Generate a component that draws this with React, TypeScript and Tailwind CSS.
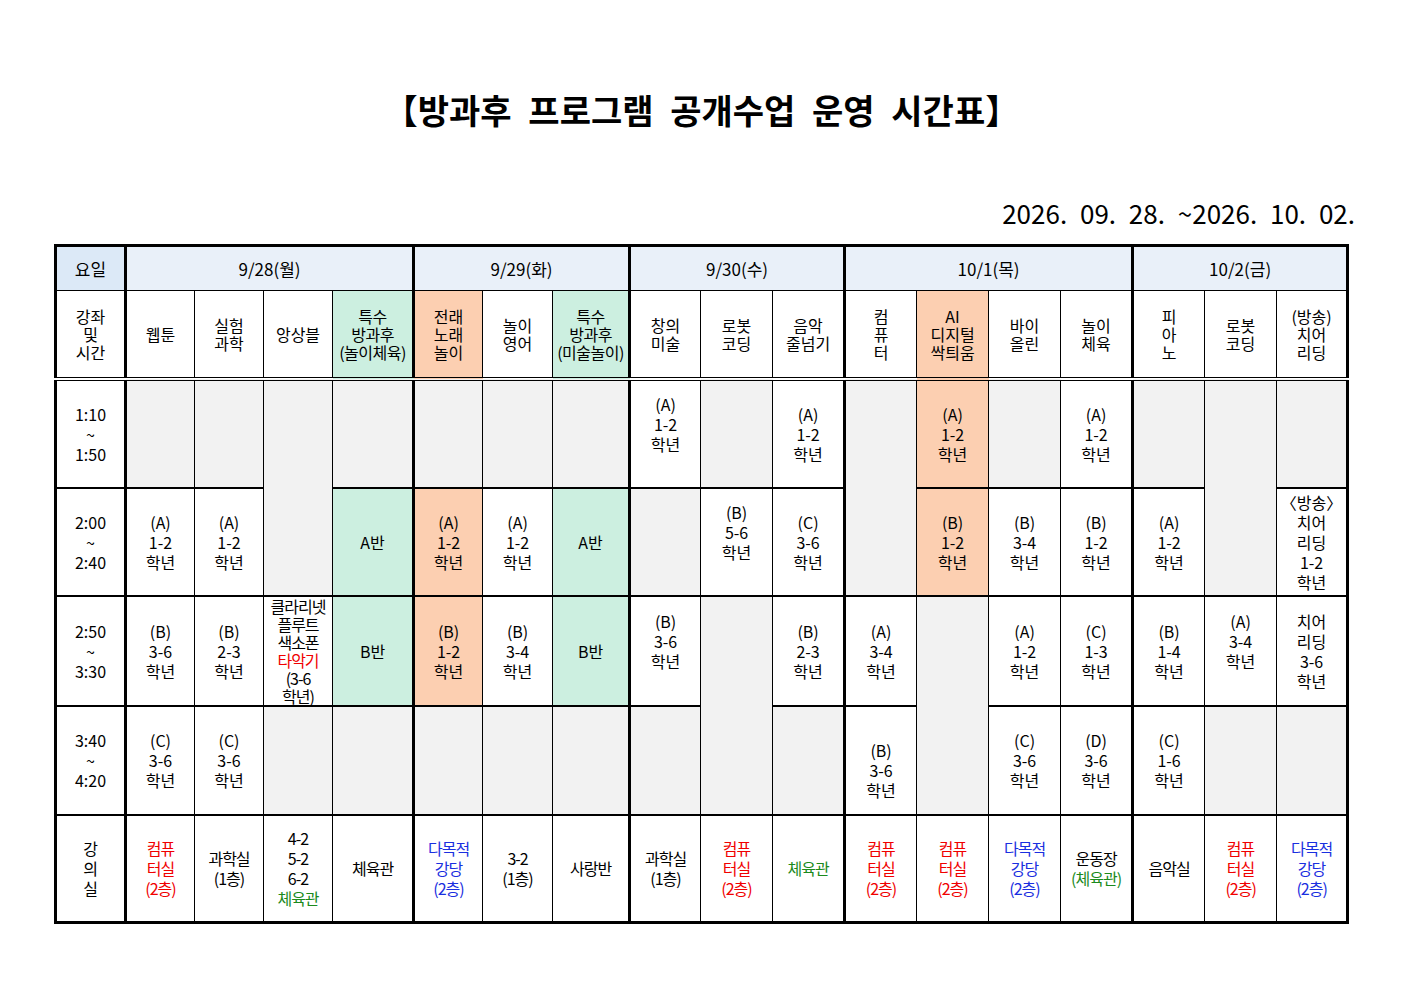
import React from "react";

type Line = string | [string, string];
type Cell = { l: Line[]; bg?: string; rs?: number; lead?: string; cls?: string } | null;

const GRAY = "bg-[#f2f2f2]";
const ORANGE = "bg-[#fccfb1]";
const MINT = "bg-[#ccefe0]";
const RED = "text-[#f00000]";
const BLUE = "text-[#1a2fe0]";
const GREEN = "text-[#1b8a1b]";

const g = (rs?: number): Cell => ({ l: [], bg: GRAY, rs });
const grade = (cls: string, yr: string, extra?: Partial<NonNullable<Cell>>): Cell => ({
  l: [cls, yr, "학년"],
  ...extra,
});

const days = [
  { label: "9/28(월)", span: 4 },
  { label: "9/29(화)", span: 3 },
  { label: "9/30(수)", span: 3 },
  { label: "10/1(목)", span: 4 },
  { label: "10/2(금)", span: 3 },
];

// first column of each day gets the thick line
const dayStart = [0, 4, 7, 10, 14];

const subjects: { l: string[]; bg?: string }[] = [
  { l: ["웹툰"] },
  { l: ["실험", "과학"] },
  { l: ["앙상블"] },
  { l: ["특수", "방과후", "(놀이체육)"], bg: MINT },
  { l: ["전래", "노래", "놀이"], bg: ORANGE },
  { l: ["놀이", "영어"] },
  { l: ["특수", "방과후", "(미술놀이)"], bg: MINT },
  { l: ["창의", "미술"] },
  { l: ["로봇", "코딩"] },
  { l: ["음악", "줄넘기"] },
  { l: ["컴", "퓨", "터"] },
  { l: ["AI", "디지털", "싹틔움"], bg: ORANGE },
  { l: ["바이", "올린"] },
  { l: ["놀이", "체육"] },
  { l: ["피", "아", "노"] },
  { l: ["로봇", "코딩"] },
  { l: ["(방송)", "치어", "리딩"] },
];

const times = [
  ["1:10", "~", "1:50"],
  ["2:00", "~", "2:40"],
  ["2:50", "~", "3:30"],
  ["3:40", "~", "4:20"],
  ["강", "의", "실"],
];

const pc: Line[] = [["컴퓨", RED], ["터실", RED], ["(2층)", RED]];
const hall: Line[] = [["다목적", BLUE], ["강당", BLUE], ["(2층)", BLUE]];

const grid: Cell[][] = [
  [
    g(), g(), g(2), g(), g(), g(), g(),
    { l: ["(A)", "1-2", "학년", ""] }, g(), grade("(A)", "1-2"),
    g(2), grade("(A)", "1-2", { bg: ORANGE }), g(), grade("(A)", "1-2"),
    g(), g(2), g(),
  ],
  [
    grade("(A)", "1-2"), grade("(A)", "1-2"), null, { l: ["A반"], bg: MINT },
    grade("(A)", "1-2", { bg: ORANGE }), grade("(A)", "1-2"), { l: ["A반"], bg: MINT },
    g(), { l: ["(B)", "5-6", "학년", ""] }, grade("(C)", "3-6"),
    null, grade("(B)", "1-2", { bg: ORANGE }), grade("(B)", "3-4"), grade("(B)", "1-2"),
    grade("(A)", "1-2"), null, { l: ["〈방송〉", "치어", "리딩", "1-2", "학년"] },
  ],
  [
    grade("(B)", "3-6"), grade("(B)", "2-3"),
    {
      l: ["클라리넷", "플루트", "색소폰", ["타악기", RED], "(3-6", "학년)"],
      lead: "leading-[18px]",
      cls: "tracking-[-1px]",
    },
    { l: ["B반"], bg: MINT },
    grade("(B)", "1-2", { bg: ORANGE }), grade("(B)", "3-4"), { l: ["B반"], bg: MINT },
    { l: ["(B)", "3-6", "학년", ""] }, g(2), grade("(B)", "2-3"),
    grade("(A)", "3-4"), g(2), grade("(A)", "1-2"), grade("(C)", "1-3"),
    grade("(B)", "1-4"), { l: ["(A)", "3-4", "학년", ""] }, { l: ["치어", "리딩", "3-6", "학년"] },
  ],
  [
    grade("(C)", "3-6"), grade("(C)", "3-6"), g(), g(),
    g(), g(), g(),
    g(), null, g(),
    { l: ["", "(B)", "3-6", "학년"] }, null, grade("(C)", "3-6"), grade("(D)", "3-6"),
    grade("(C)", "1-6"), g(), g(),
  ],
  [
    { l: pc }, { l: ["과학실", "(1층)"] }, { l: ["4-2", "5-2", "6-2", ["체육관", GREEN]] }, { l: ["체육관"] },
    { l: hall }, { l: ["3-2", "(1층)"] }, { l: ["사랑반"] },
    { l: ["과학실", "(1층)"] }, { l: pc }, { l: [["체육관", GREEN]] },
    { l: pc }, { l: pc }, { l: hall }, { l: ["운동장", ["(체육관)", GREEN]] },
    { l: ["음악실"] }, { l: pc }, { l: hall },
  ],
];

const rowH = ["h-[109px]", "h-[108px]", "h-[109px]", "h-[109px]", "h-[108px]"];
const colW = [70, 69, 69, 69, 81, 69, 70, 77, 71, 72, 72, 72, 72, 72, 72, 72, 72, 71];

function Lines({ l }: { l: Line[] }) {
  return (
    <>
      {l.map((x, i) =>
        typeof x === "string" ? (
          <div key={i}>{x === "" ? "\u00a0" : x}</div>
        ) : (
          <div key={i} className={x[1]}>
            {x[0]}
          </div>
        )
      )}
    </>
  );
}

export default function App() {
  return (
    <div className="w-[1403px] bg-white text-black font-['Noto_Sans_CJK_KR','Noto_Sans',sans-serif]">
      <h1 className="pt-[90px] text-center text-[34px] font-bold leading-[40px] [word-spacing:9px]">
        【방과후 프로그램 공개수업 운영 시간표】
      </h1>
      <div className="mt-[67px] pr-[48px] text-right text-[26px] leading-[32px] [word-spacing:7px]">
        2026. 09. 28. ~2026. 10. 02.
      </div>
      <div className="mt-[15px] px-[54px]">
        <table className="w-[1295px] table-fixed border-collapse border-[3px] border-black text-center text-[16px]">
          <colgroup>
            {colW.map((w, i) => (
              <col key={i} style={{ width: w }} />
            ))}
          </colgroup>
          <tbody>
            <tr className="h-[45px]">
              <td className="border border-r-[3px] border-black bg-[#dce9f7] text-[17px]">요일</td>
              {days.map((d) => (
                <td
                  key={d.label}
                  colSpan={d.span}
                  className="border border-l-[3px] border-black bg-[#e9f0f9] text-[17px]"
                >
                  {d.label}
                </td>
              ))}
            </tr>
            <tr className="h-[88px]">
              <td className="border border-r-[3px] border-b-4 border-black leading-[18px] [border-bottom-style:double]">
                <Lines l={["강좌", "및", "시간"]} />
              </td>
              {subjects.map((s, i) => (
                <td
                  key={i}
                  className={`border border-b-4 border-black px-0 leading-[18px] [border-bottom-style:double] ${
                    s.bg ?? ""
                  } ${dayStart.includes(i) ? "border-l-[3px]" : ""} ${i === 3 || i === 6 ? "tracking-[-0.5px]" : ""}`}
                >
                  <Lines l={s.l} />
                </td>
              ))}
            </tr>
            {grid.map((row, r) => (
              <tr key={r} className={rowH[r]}>
                <td
                  className={`border border-r-[3px] border-black leading-[20px] ${r > 0 ? "border-t-2" : ""}`}
                >
                  <Lines l={times[r]} />
                </td>
                {row.map((c, i) =>
                  c === null ? null : (
                    <td
                      key={i}
                      rowSpan={c.rs}
                      className={`border border-black px-0 align-middle ${c.lead ?? "leading-[20px]"} ${
                        c.bg ?? ""
                      } ${r > 0 ? "border-t-2" : ""} ${dayStart.includes(i) ? "border-l-[3px]" : ""} ${
                        r === 4 ? "tracking-[-1px]" : ""
                      } ${c.cls ?? ""}`}
                    >
                      <Lines l={c.l} />
                    </td>
                  )
                )}
              </tr>
            ))}
          </tbody>
        </table>
      </div>
    </div>
  );
}
